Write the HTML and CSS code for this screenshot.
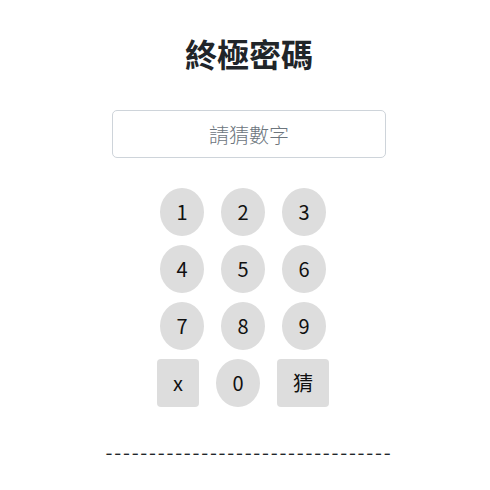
FILE: index.html
```html
<!DOCTYPE html>
<html lang="zh-Hant">
<head>
<meta charset="utf-8">
<title>終極密碼</title>
<link rel="stylesheet" href="styles.css">
</head>
<body>
<main class="app">
  <h2 class="title">終極密碼</h2>
  <input class="guess-input" type="text" placeholder="請猜數字">
  <div class="keypad">
    <div class="key-row">
      <button class="key round">1</button>
      <button class="key round">2</button>
      <button class="key round">3</button>
    </div>
    <div class="key-row">
      <button class="key round">4</button>
      <button class="key round">5</button>
      <button class="key round">6</button>
    </div>
    <div class="key-row">
      <button class="key round">7</button>
      <button class="key round">8</button>
      <button class="key round">9</button>
    </div>
    <div class="key-row">
      <button class="key square">x</button>
      <button class="key round">0</button>
      <button class="key square">猜</button>
    </div>
  </div>
  <div class="divider">---------------------------------</div>
</main>
</body>
</html>
```

FILE: styles.css
```css
* { box-sizing: border-box; }
html, body {
  margin: 0;
  padding: 0;
  background: #fff;
}
body {
  font-family: "Noto Sans CJK TC", "Noto Sans", sans-serif;
  color: #212529;
}
.app {
  display: flex;
  flex-direction: column;
  align-items: center;
  padding-top: 34px;
  padding-left: 8px;
}
.title {
  margin: 0;
  font-size: 32px;
  font-weight: 700;
  line-height: 1.2;
}
.guess-input {
  margin-top: 38px;
  width: 274px;
  height: 48px;
  padding: 8px 16px;
  font-family: inherit;
  font-size: 20px;
  line-height: 1.5;
  text-align: center;
  border: 1px solid #ced4da;
  border-radius: 5px;
  color: #495057;
  outline: none;
}
.guess-input::placeholder {
  color: #6c757d;
  font-weight: 300;
}
.keypad {
  margin-top: 30px;
  display: flex;
  flex-direction: column;
  gap: 9px;
  margin-right: 12px;
}
.key-row {
  display: flex;
  justify-content: center;
  gap: 17px;
}
.key {
  height: 48px;
  border: none;
  background: #dddddd;
  color: #111;
  font-family: inherit;
  font-size: 20px;
  font-weight: 400;
  line-height: 1.5;
  padding: 0;
  display: flex;
  align-items: center;
  justify-content: center;
}
.key.round {
  width: 44px;
  border-radius: 50%;
}
.key.square {
  border-radius: 4px;
}
.key.square:first-child { width: 42px; }
.key.square:last-child { width: 52px; }
.divider {
  margin-top: 30px;
  font-size: 20px;
  line-height: 1.5;
  letter-spacing: 1.75px;
  color: #212529;
}
```
